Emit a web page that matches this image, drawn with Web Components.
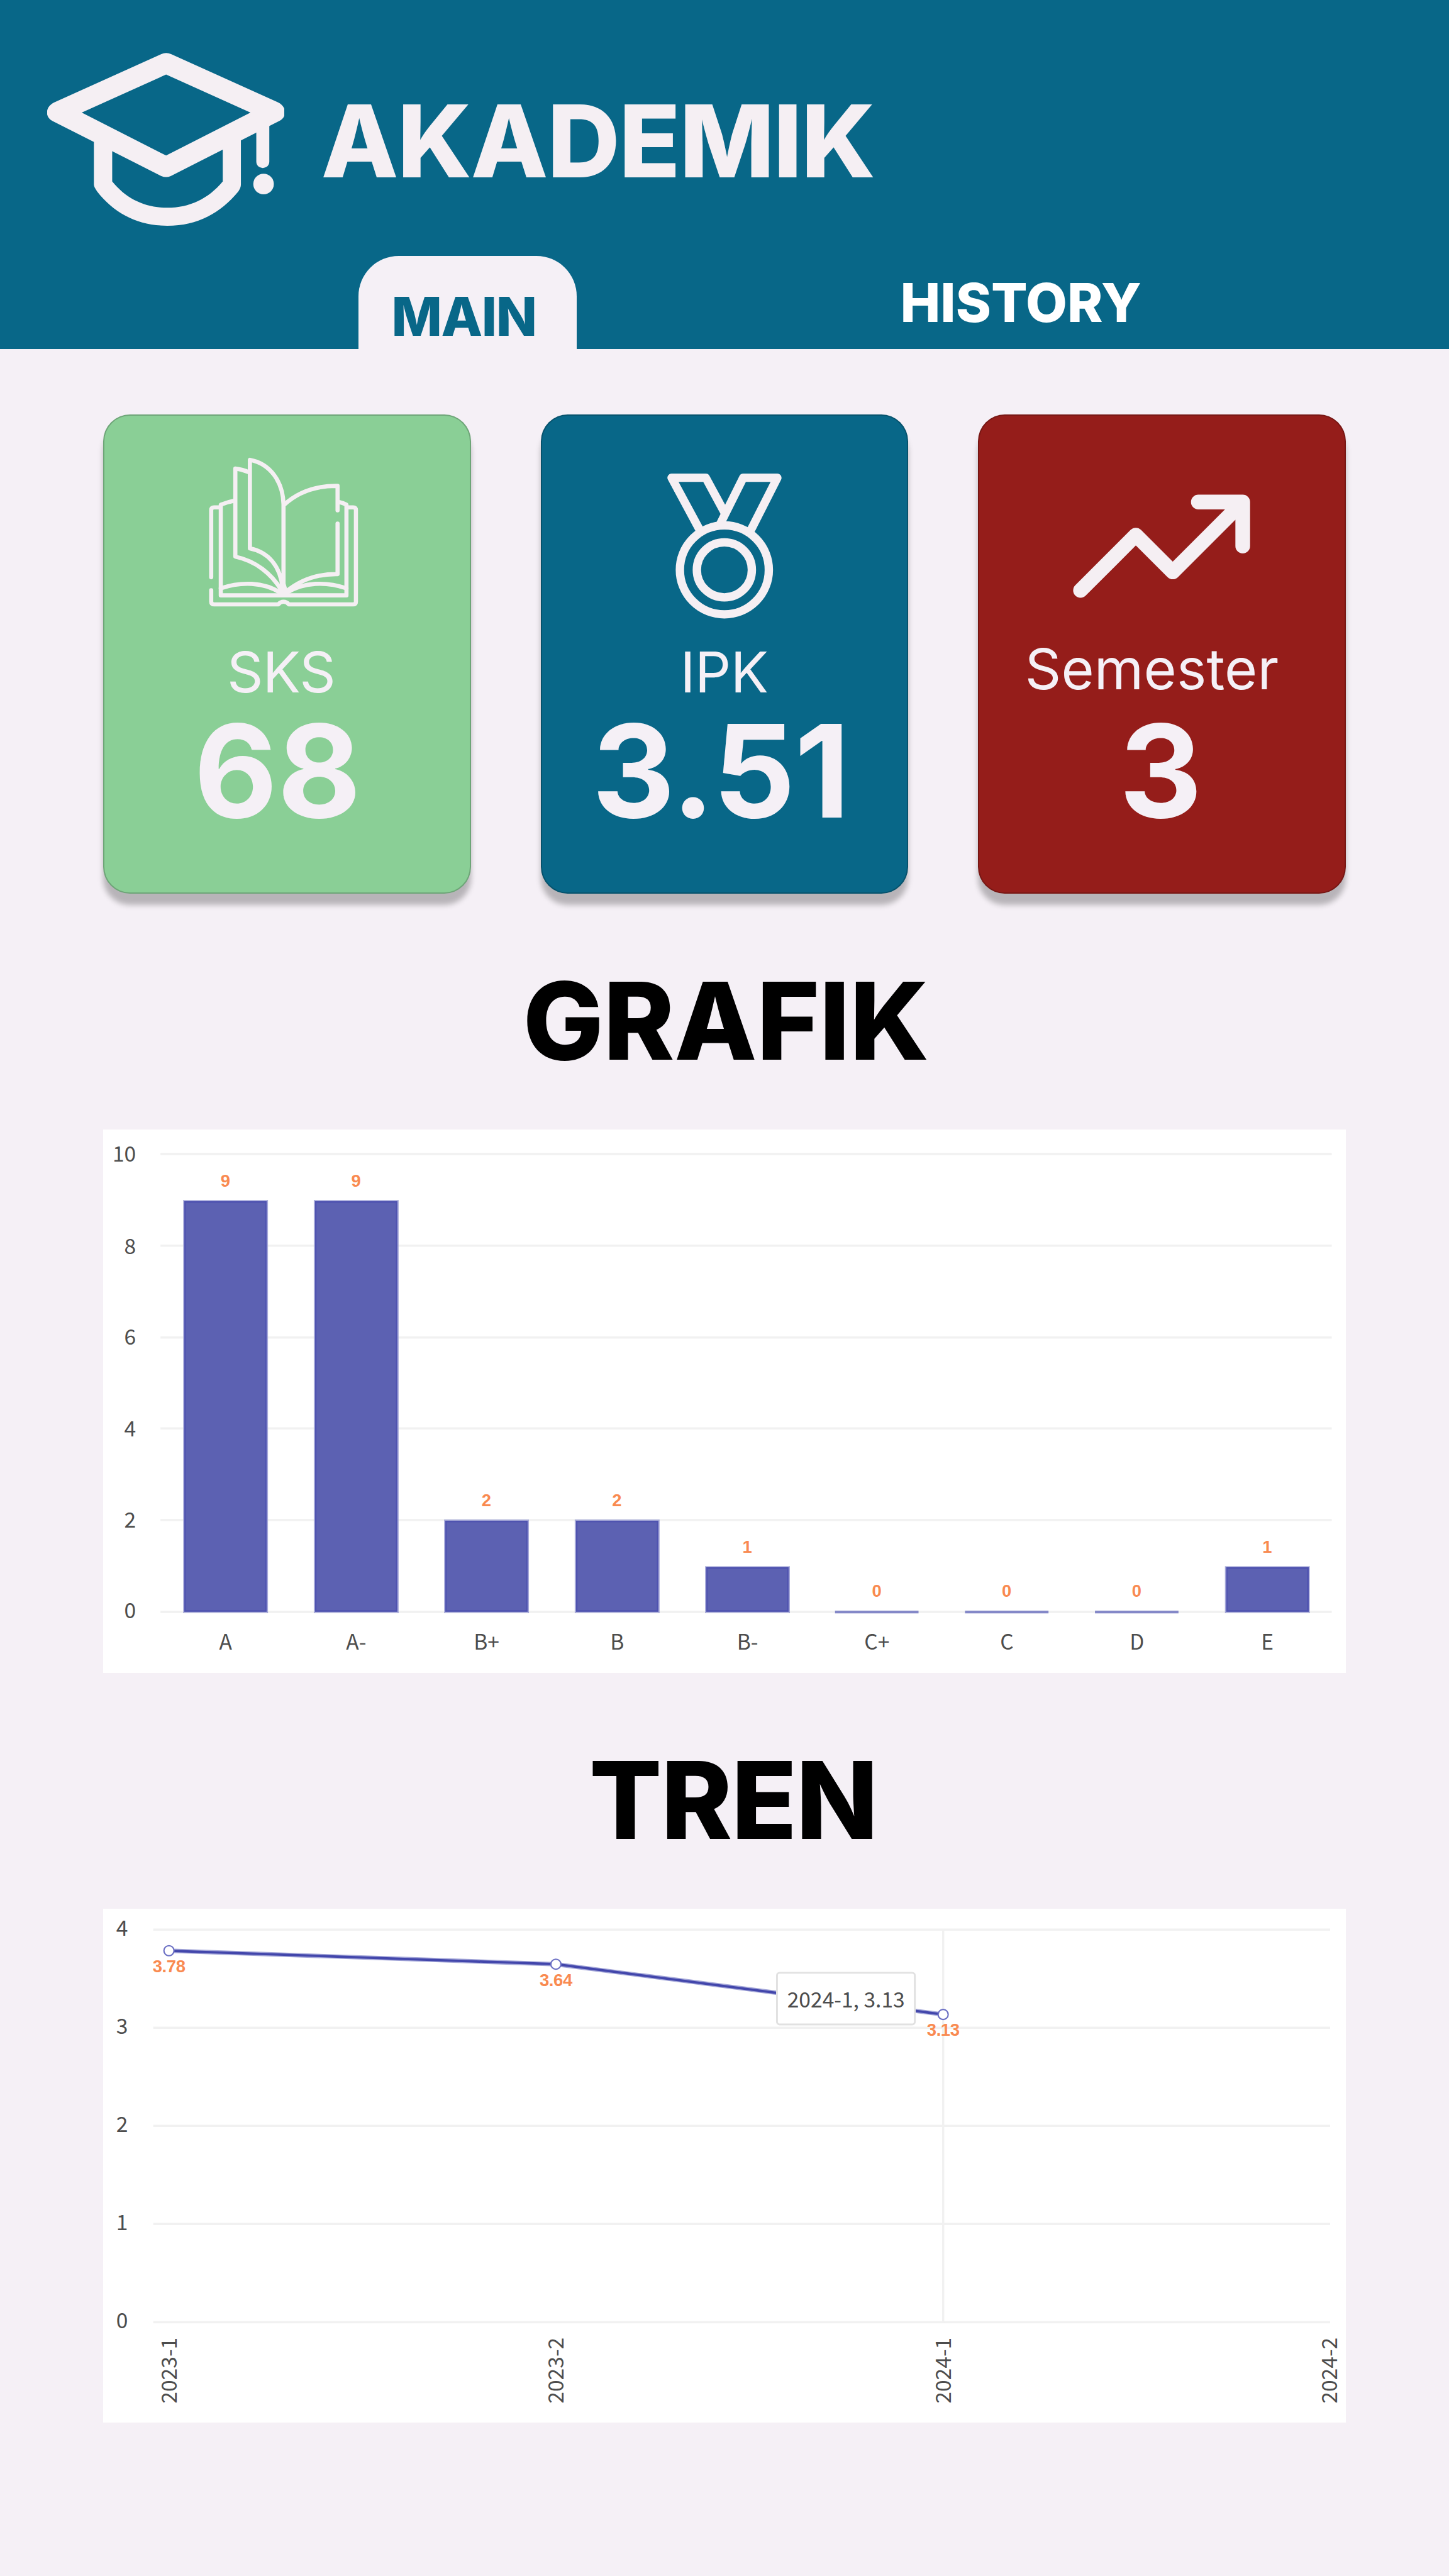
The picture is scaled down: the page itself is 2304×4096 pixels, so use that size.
<!DOCTYPE html>
<html lang="id">
<head>
<meta charset="utf-8">
<title>Akademik</title>
<style>
/* 1rem = 100 design units */
html{font-size:53.33333px}
body{margin:0;background:#f5f0f6;font-family:Inter,"Liberation Sans",sans-serif}
</style>
</head>
<body>
<akademik-app></akademik-app>
<script>
const define = (name, html) => customElements.define(name, class extends HTMLElement {
  connectedCallback() {
    if (this.shadowRoot) return;
    const t = document.createElement('template');
    t.innerHTML = typeof html === 'function' ? html(this) : html;
    this.attachShadow({mode: 'open'}).append(t.content.cloneNode(true));
  }
});

define('cap-icon', `
<style>:host{display:block;flex:none;width:7.082rem;height:5.155rem}svg{display:block;width:100%;height:100%}</style>
<svg viewBox="78 98 1388 1347" preserveAspectRatio="none" fill="#f5eff3">
<path fill-rule="evenodd" d="M745 108Q773 90 802 108L1425 483C1480 515 1480 600 1435 628L800 1058Q773 1074 745 1058L108 628C65 600 65 520 118 485ZM773 267L1266 564L773 898L280 564Z"/>
<path d="M351 770V1125C351 1140 358 1155 370 1178C470 1350 610 1445 780 1445C960 1445 1090 1345 1195 1178Q1210 1150 1210 1125V765H1104V1100C1020 1235 910 1305 780 1305C650 1305 540 1235 458 1100V790Z"/>
<path d="M1300 640H1376V945C1376 1012 1300 1012 1300 945Z"/>
<ellipse cx="1342.5" cy="1120" rx="60" ry="80.5"/>
</svg>`);

define('book-icon', `
<style>:host{display:block;width:5.4rem;height:5rem}svg{display:block;width:100%;height:100%;overflow:visible}
path{vector-effect:non-scaling-stroke}</style>
<svg viewBox="0 0 1568 1500" preserveAspectRatio="none" fill="none" stroke="#f5eff3" stroke-width="6.6" stroke-linecap="round" stroke-linejoin="round">
<path d="M146 1141V540Q146 516 172 516H222"/>
<path d="M146 1257V1358Q146 1384 172 1384H727Q745 1360 772 1360Q800 1360 818 1384H1375Q1399 1384 1399 1358V540Q1399 516 1375 516H1325"/>
<path d="M350 455Q290 466 229 492V1303H1317V492Q1285 476 1248 467"/>
<path d="M474 202Q420 178 355 169V957C530 995 670 1110 752 1255"/>
<path d="M772 1280V490C768 290 660 125 481 91V883C640 915 745 1040 764 1240"/>
<path d="M778 492Q960 320 1240 324V543M1240 661V1113Q980 1108 785 1278"/>
<path d="M229 1240C400 1180 600 1180 750 1283M1317 1240C1146 1180 946 1180 795 1283"/>
<path fill="#f5eff3" d="M752 1255L772 1200L792 1270L800 1290H745Z"/>
</svg>`);

define('medal-icon', `
<style>:host{display:block;width:3.6rem;height:4.5rem}svg{display:block;width:100%;height:100%}</style>
<svg viewBox="1980 1400 360 450" fill="none" stroke="#f5eff3" stroke-width="25" stroke-linejoin="round">
<circle cx="2159.6" cy="1698.4" r="132.6"/><circle cx="2159.6" cy="1698.4" r="82"/>
<path d="M2086 1579L2002.3 1423.8H2104.1L2160 1527M2147 1562L2215.8 1423.8H2317.6L2238.5 1580"/>
</svg>`);

define('trend-icon', `
<style>:host{display:block;width:5.4rem;height:3.2rem}svg{display:block;width:100%;height:100%}</style>
<svg viewBox="3190 1464 540 320" fill="none" stroke="#f5eff3" stroke-width="43.8" stroke-linejoin="round" stroke-linecap="round">
<path d="M3222 1760L3386.9 1594.9L3497.1 1704.8L3705.7 1496.4M3573.3 1496.4H3705.7V1627.7"/>
</svg>`);

define('tab-item', `
<style>
:host{display:flex;box-sizing:border-box;flex:none;align-items:flex-start;justify-content:flex-start;width:6.5rem;height:2.76rem;font-weight:800;font-size:1.6rem;line-height:1.6rem;color:#fff;padding-top:.6rem}
:host([active]){background:#f5f0f6;color:#086788;border-radius:1.2rem 1.2rem 0 0;padding-top:1rem}
</style><slot></slot>`);

define('app-header', `
<style>
:host{display:flex;flex-direction:column;box-sizing:border-box;height:10.4rem;background:#086788}
.brand{display:flex;align-items:flex-start;padding:1.575rem 0 0 1.398rem;height:6.065rem}
h1{margin:1.122rem 0 0 1.09rem;font-size:3rem;line-height:3rem;font-weight:800;letter-spacing:-.028rem;color:#f5eff3}
nav{display:flex;padding-left:10.69rem;gap:9.6rem}
</style>
<div class="brand"><cap-icon></cap-icon><h1><slot></slot></h1></div>
<nav><slot name="tabs"></slot></nav>`);

define('stat-card', `
<style>
:host{display:flex;flex-direction:column;box-sizing:border-box;width:10.96rem;height:14.28rem;border:.04rem solid rgba(0,0,0,.2);border-radius:.8rem;background:var(--card-bg);box-shadow:0 .32rem .16rem rgba(0,0,0,.25);color:#f5f0f6;white-space:nowrap}
.icon{height:6.56rem;box-sizing:border-box;padding:var(--icon-y) 0 0 var(--icon-x)}
.label{font-weight:400;font-size:1.68rem;line-height:2rem;height:2.11rem;padding:var(--label-y,.095rem) 0 0 var(--label-x);box-sizing:border-box;letter-spacing:var(--label-ls,0)}
.value{font-weight:700;font-size:3.84rem;line-height:3.84rem;padding-left:var(--value-x);letter-spacing:var(--value-ls,0)}
</style>
<div class="icon"><slot name="icon"></slot></div>
<div class="label"><slot name="label"></slot></div>
<div class="value"><slot name="value"></slot></div>`);

define('section-title', `
<style>:host{display:block;font-weight:800;font-size:3.2rem;line-height:3.2rem;color:#000;white-space:nowrap}</style><slot></slot>`);

const chartStyle = `
:host{display:block;background:#fff}
svg{display:block;width:100%;height:100%}
.axis{font:63px "Noto Sans CJK SC",sans-serif;fill:#4d4d4d}
.val{font:bold 51.5px "Liberation Sans",sans-serif;letter-spacing:-.8px;fill:#f98a50;text-anchor:middle}
.mid{text-anchor:middle}.end{text-anchor:end}
.grid{stroke:#f1f1f1;stroke-width:6.5}`;

define('bar-chart', () => {
  const ticks = [[10,3440.5,3463],[8,3714,3739],[6,3987.7,4008],[4,4258.5,4282],[2,4532,4555],[0,4805.7,4825]];
  const bars = [['A',9,548,3579.4],['A-',9,937.5,3579.4],['B+',2,1326,4532],['B',2,1715.5,4532],['B-',1,2104,4671],['C+',0,2490,4803],['C',0,2877.5,4803],['D',0,3265,4803],['E',1,3654,4671]];
  return `<style>${chartStyle}:host{height:16.2rem}</style>
<svg viewBox="308 3367.5 3704 1620" preserveAspectRatio="none">
${ticks.map(([t,y,b]) => `<path class="grid" d="M479 ${y}H3971"/><text class="axis end" x="406" y="${b}">${t}</text>`).join('')}
${bars.map(([n,v,x,y]) => (v ? `<rect x="${x+4}" y="${y+4}" width="242" height="${4806-y-7}" fill="#5c61b2" stroke="#4f53b0" stroke-width="5"/><rect x="${x}" y="${y}" width="250" height="${4808-y}" fill="none" stroke="#a5a8d8" stroke-width="3"/>` : `<rect x="${x}" y="4802" width="249" height="8" fill="#8488c8"/>`)
 + `<text class="val" x="${x+124}" y="${v ? (v==9?3539:v==2?4491:4630) : 4760}">${v}</text><text class="axis mid" x="${x+125}" y="4919">${n}</text>`).join('')}
</svg>`;
});

define('line-chart', () => {
  const ticks = [[4,5753.2],[3,6045.9],[2,6338.5],[1,6631],[0,6923.8]];
  const pts = [[504.2,5816.2,'3.78',5881],[1657.8,5856.4,'3.64',5921.5],[2812.4,6006.3,'3.13',6069.5]];
  const line = pts.map(p => p[0]+' '+p[1]).join('L');
  return `<style>${chartStyle}:host{height:15.33rem}</style>
<svg viewBox="308 5691 3704 1533" preserveAspectRatio="none">
${ticks.map(([t,y]) => `<path class="grid" d="M457.5 ${y}H3966"/><text class="axis end" x="382" y="${y+18}">${t}</text>`).join('')}
<path class="grid" d="M2812.4 5753V6924"/>
<path d="M${line}" fill="none" stroke="#a3a6d8" stroke-width="13"/><path d="M${line}" fill="none" stroke="#4246ab" stroke-width="7"/>
${pts.map(([x,y,v,b]) => `<circle cx="${x}" cy="${y}" r="15" fill="#fff" stroke="#6b6fc4" stroke-width="4"/><text class="val" x="${x}" y="${b}">${v}</text>`).join('')}
<rect x="2317" y="5882" width="411" height="154" rx="8" fill="#fff" stroke="#e1e1e1" stroke-width="5.5"/>
<text class="axis" x="2347.5" y="5984.5">2024-1, 3.13</text>
${[['2023-1',528],['2023-2',1680],['2024-1',2835.5],['2024-2',3987]].map(([t,x]) => `<text class="axis" transform="translate(${x} 7166) rotate(-90)">${t}</text>`).join('')}
</svg>`;
});

define('akademik-app', `
<style>
:host{display:flex;flex-direction:column;width:43.2rem;height:76.8rem;overflow:hidden;background:#f5f0f6}
.cards{display:flex;gap:2.08rem;padding:1.96rem 0 0 3.08rem}
bar-chart,line-chart{margin-left:3.08rem;width:37.04rem}
.main{padding-left:.98rem;letter-spacing:-.026rem}
.history{padding-left:.05rem}
</style>
<app-header>AKADEMIK
<tab-item slot="tabs" active class="main">MAIN</tab-item><tab-item slot="tabs" class="history">HISTORY</tab-item></app-header>
<div class="cards">
<stat-card style="--card-bg:#8acf96;--icon-x:2.68rem;--icon-y:1rem;--label-x:3.65rem;--label-ls:-.013rem;--value-x:2.66rem"><book-icon slot="icon"></book-icon><span slot="label">SKS</span><span slot="value">68</span></stat-card>
<stat-card style="--card-bg:#086788;--icon-x:3.64rem;--icon-y:1.6rem;--label-x:4.12rem;--label-ls:-.01rem;--value-x:1.49rem;--value-ls:-.0235rem"><medal-icon slot="icon"></medal-icon><span slot="label">IPK</span><span slot="value">3.51</span></stat-card>
<stat-card style="--card-bg:#951d1a;--icon-x:2.7rem;--icon-y:2.24rem;--label-x:1.36rem;--label-y:0;--label-ls:.004rem;--value-x:4.17rem"><trend-icon slot="icon"></trend-icon><span slot="label">Semester</span><span slot="value">3</span></stat-card>
</div>
<section-title style="margin:2.19rem 0 0 15.59rem;letter-spacing:-.006rem">GRAFIK</section-title>
<bar-chart style="margin-top:1.64rem"></bar-chart>
<section-title style="margin:2.2rem 0 0 17.57rem;letter-spacing:-.025rem">TREN</section-title>
<line-chart style="margin-top:1.635rem"></line-chart>`);
</script>
</body>
</html>
